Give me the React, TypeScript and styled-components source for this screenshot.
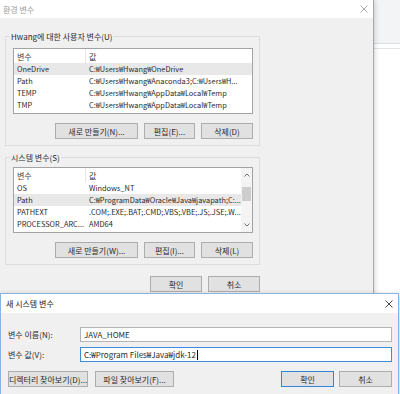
import styled, { createGlobalStyle } from "styled-components";

const GlobalStyle = createGlobalStyle`
  html, body {
    margin: 0;
    padding: 0;
    background: #fff;
  }
  body {
    font-family: "Noto Sans CJK KR", "Noto Sans", sans-serif;
    font-size: 8px;
    color: #2a2a2a;
  }
  * {
    box-sizing: border-box;
  }
`;

const Desktop = styled.div`
  position: relative;
  width: 400px;
  height: 394px;
  overflow: hidden;
  background: #fff;
`;

// window partly hidden behind the dialogs, on the right
const BackWindow = styled.div`
  position: absolute;
  left: 374px;
  top: 0;
  width: 40px;
  height: 394px;
  background: #fff;
  display: flex;
  flex-direction: column;
`;

const BackToolbar = styled.div`
  height: 44px;
  background: #f3f4f6;
  border-bottom: 1px solid #dcdfe3;
`;

const BackRule = styled.div`
  margin-top: 4px;
  border-top: 1px solid #e4e4e4;
`;

const Window = styled.section<{ $left: number; $top: number; $width: number; $height: number; $active?: boolean }>`
  position: absolute;
  left: ${p => p.$left}px;
  top: ${p => p.$top}px;
  width: ${p => p.$width}px;
  height: ${p => p.$height}px;
  background: #f0f0f0;
  border: 1px solid ${p => (p.$active ? "#86b4e4" : "#a8a8a8")};
  box-shadow: 1px 1px 5px rgba(0, 0, 0, 0.18);
  display: flex;
  flex-direction: column;
`;

const TitleBar = styled.header<{ $height: number; $active?: boolean; $indent: number }>`
  height: ${p => p.$height}px;
  flex-shrink: 0;
  background: #fff;
  display: flex;
  align-items: center;
  justify-content: space-between;
  padding: 0 5px 0 ${p => p.$indent}px;
  color: ${p => (p.$active ? "#111" : "#9a9a9a")};
  font-size: 8px;
`;

const CloseIcon = ({ color }: { color: string }) => (
  <svg width="8" height="8" viewBox="0 0 8 8">
    <path d="M0.5 0.5 L7.5 7.5 M7.5 0.5 L0.5 7.5" stroke={color} strokeWidth="0.9" />
  </svg>
);

const EnvBody = styled.div`
  padding: 13px 0 0 5px;
  display: flex;
  flex-direction: column;
`;

const Group = styled.fieldset<{ $gap?: number }>`
  width: 255px;
  min-width: 0;
  margin: ${p => p.$gap ?? 0}px 0 0 0;
  padding: 0 6px 6px 7px;
  border: 1px solid #dcdcdc;
`;

const GroupLabel = styled.legend`
  font-size: 8px;
  line-height: 11px;
  padding: 0 1px;
  margin-left: -3px;
`;

const List = styled.div<{ $offset: number }>`
  margin-top: ${p => p.$offset}px;
  height: 66px;
  border: 1px solid #a3a3a3;
  background: #fff;
  display: flex;
  overflow: hidden;
`;

const Table = styled.div`
  flex: 1;
  min-width: 0;
  display: grid;
  grid-template-columns: 72px minmax(0, 1fr);
  grid-auto-rows: 12px;
  grid-template-rows: 14px;
`;

const HeadCell = styled.div<{ $first?: boolean }>`
  display: flex;
  align-items: center;
  padding-left: 3px;
  border-right: ${p => (p.$first ? "1px solid #e5e5e5" : "none")};
  color: #3a3a3a;
`;

const Cell = styled.div<{ $selected?: boolean }>`
  padding-left: 3px;
  font-size: 7.4px;
  line-height: 12px;
  white-space: nowrap;
  overflow: hidden;
  text-overflow: ellipsis;
  background: ${p => (p.$selected ? "#e8e8e8" : "transparent")};
`;

const ScrollBar = styled.div`
  width: 11px;
  flex-shrink: 0;
  display: flex;
  flex-direction: column;
  background: #f4f4f4;
`;

const ScrollArrow = styled.div`
  height: 14px;
  display: flex;
  align-items: center;
  justify-content: center;
`;

const ScrollTrack = styled.div`
  flex: 1;
  padding: 5px 1px 0;
`;

const Thumb = styled.div`
  height: 14px;
  background: #cdcdcd;
`;

const Chevron = ({ up }: { up?: boolean }) => (
  <svg width="6" height="4" viewBox="0 0 6 4">
    <path d={up ? "M0.5 3.5 L3 1 L5.5 3.5" : "M0.5 0.5 L3 3 L5.5 0.5"} fill="none" stroke="#606060" strokeWidth="0.9" />
  </svg>
);

const ButtonRow = styled.div<{ $top: number }>`
  margin-top: ${p => p.$top}px;
  display: flex;
  justify-content: flex-end;
  align-items: center;
  gap: 6px;
`;

const Button = styled.button<{ $width: number; $default?: boolean }>`
  width: ${p => p.$width}px;
  height: 16px;
  padding: 0;
  margin: 0;
  background: #e1e1e1;
  border: 1px solid ${p => (p.$default ? "#2f86d6" : "#adadad")};
  font-family: inherit;
  font-size: 8px;
  color: #2a2a2a;
  display: flex;
  align-items: center;
  justify-content: center;
  white-space: nowrap;
`;

const Footer = styled.div`
  width: 255px;
  margin-top: 11px;
  display: flex;
  justify-content: flex-end;
  gap: 6px;
`;

const DialogBody = styled.div`
  padding: 14px 6px 0 7px;
  display: flex;
  flex-direction: column;
`;

const FormRow = styled.div<{ $top?: number }>`
  margin-top: ${p => p.$top ?? 0}px;
  display: flex;
  align-items: center;
`;

const FieldLabel = styled.label`
  width: 72px;
  flex-shrink: 0;
`;

const TextBox = styled.div<{ $focused?: boolean }>`
  flex: 1;
  height: 15px;
  background: #fff;
  border: 1px solid ${p => (p.$focused ? "#3a8ddb" : "#b4b4b4")};
  padding-left: 3px;
  display: flex;
  align-items: center;
  white-space: nowrap;
`;

const Caret = styled.span`
  width: 1px;
  height: 10px;
  margin-left: 1px;
  background: #000;
`;

const DialogButtons = styled.div`
  margin-top: 9px;
  display: flex;
  align-items: center;
  gap: 7px;
`;

const RightButtons = styled.div`
  margin-left: auto;
  display: flex;
  gap: 5px;
`;

type Row = { name: string; value: string; selected?: boolean };

const userVars: Row[] = [
  { name: "OneDrive", value: "C:₩Users₩Hwang₩OneDrive", selected: true },
  { name: "Path", value: "C:₩Users₩Hwang₩Anaconda3;C:₩Users₩H..." },
  { name: "TEMP", value: "C:₩Users₩Hwang₩AppData₩Local₩Temp" },
  { name: "TMP", value: "C:₩Users₩Hwang₩AppData₩Local₩Temp" },
];

const systemVars: Row[] = [
  { name: "OS", value: "Windows_NT" },
  { name: "Path", value: "C:₩ProgramData₩Oracle₩Java₩javapath;C:...", selected: true },
  { name: "PATHEXT", value: ".COM;.EXE;.BAT;.CMD;.VBS;.VBE;.JS;.JSE;.W..." },
  { name: "PROCESSOR_ARC...", value: "AMD64" },
];

const VarTable = ({ rows }: { rows: Row[] }) => (
  <Table>
    <HeadCell $first>변수</HeadCell>
    <HeadCell>값</HeadCell>
    {rows.map(r => [
      <Cell key={r.name + "-n"} $selected={r.selected}>{r.name}</Cell>,
      <Cell key={r.name + "-v"} $selected={r.selected}>{r.value}</Cell>,
    ])}
  </Table>
);

export default function App() {
  return (
    <Desktop>
      <GlobalStyle />
      <BackWindow>
        <BackToolbar />
        <BackRule />
      </BackWindow>

      <Window $left={-1} $top={-1} $width={375} $height={300}>
        <TitleBar $height={18} $indent={3}>
          <span>환경 변수</span>
          <CloseIcon color="#a0a0a0" />
        </TitleBar>
        <EnvBody>
          <Group>
            <GroupLabel>Hwang에 대한 사용자 변수(U)</GroupLabel>
            <List $offset={6}>
              <VarTable rows={userVars} />
            </List>
            <ButtonRow $top={9}>
              <Button $width={83}>새로 만들기(N)...</Button>
              <Button $width={51}>편집(E)...</Button>
              <Button $width={52}>삭제(D)</Button>
            </ButtonRow>
          </Group>
          <Group $gap={6}>
            <GroupLabel>시스템 변수(S)</GroupLabel>
            <List $offset={4}>
              <VarTable rows={systemVars} />
              <ScrollBar>
                <ScrollArrow>
                  <Chevron up />
                </ScrollArrow>
                <ScrollTrack>
                  <Thumb />
                </ScrollTrack>
                <ScrollArrow>
                  <Chevron />
                </ScrollArrow>
              </ScrollBar>
            </List>
            <ButtonRow $top={9}>
              <Button $width={83}>새로 만들기(W)...</Button>
              <Button $width={51}>편집(I)...</Button>
              <Button $width={52}>삭제(L)</Button>
            </ButtonRow>
          </Group>
          <Footer>
            <Button $width={52}>확인</Button>
            <Button $width={52}>취소</Button>
          </Footer>
        </EnvBody>
      </Window>

      <Window $left={0} $top={293} $width={399} $height={120} $active>
        <TitleBar $height={19} $indent={5} $active>
          <span>새 시스템 변수</span>
          <CloseIcon color="#333" />
        </TitleBar>
        <DialogBody>
          <FormRow>
            <FieldLabel>변수 이름(N):</FieldLabel>
            <TextBox>JAVA_HOME</TextBox>
          </FormRow>
          <FormRow $top={5}>
            <FieldLabel>변수 값(V):</FieldLabel>
            <TextBox $focused>
              C:₩Program Files₩Java₩jdk-12
              <Caret />
            </TextBox>
          </FormRow>
          <DialogButtons>
            <Button $width={80}>디렉터리 찾아보기(D)...</Button>
            <Button $width={79}>파일 찾아보기(F)...</Button>
            <RightButtons>
              <Button $width={53} $default>확인</Button>
              <Button $width={53}>취소</Button>
            </RightButtons>
          </DialogButtons>
        </DialogBody>
      </Window>
    </Desktop>
  );
}
